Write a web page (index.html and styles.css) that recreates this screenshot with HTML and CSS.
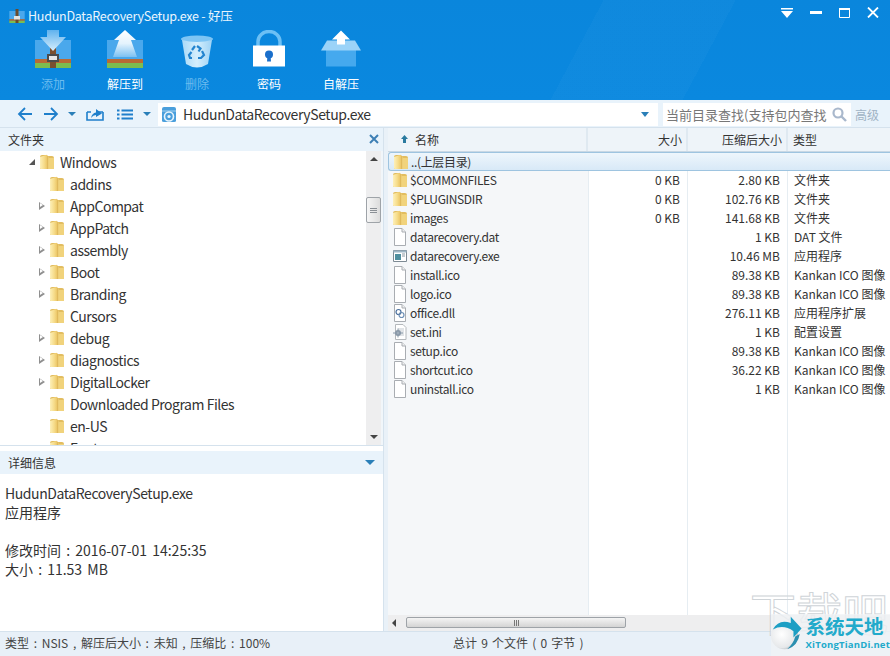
FILE: index.html
```html
<!DOCTYPE html>
<html lang="zh-CN">
<head>
<meta charset="utf-8">
<title>HudunDataRecoverySetup.exe - 好压</title>
<link rel="stylesheet" href="styles.css">
</head>
<body>
<svg class="defs" width="0" height="0" aria-hidden="true">
  <defs>
    <linearGradient id="fy" x1="0" y1="0" x2="1" y2="0"><stop offset="0" stop-color="#fdf0ba"/><stop offset=".6" stop-color="#f6dc8a"/><stop offset="1" stop-color="#ecc768"/></linearGradient>
    <linearGradient id="fr" x1="0" y1="0" x2="1" y2="0"><stop offset="0" stop-color="#d9b050"/><stop offset="1" stop-color="#f4d884"/></linearGradient>
    <linearGradient id="upa" x1="0" y1="0" x2="0" y2="1"><stop offset="0" stop-color="#fff"/><stop offset=".5" stop-color="#e4f3fd"/><stop offset="1" stop-color="#7cc1f2"/></linearGradient>
    <linearGradient id="dna" x1="0" y1="0" x2="0" y2="1"><stop offset="0" stop-color="#5fb2ee"/><stop offset="1" stop-color="#d7eefc"/></linearGradient>
    <linearGradient id="bin" x1="0" y1="0" x2="1" y2="0"><stop offset="0" stop-color="#a8d9f8"/><stop offset=".5" stop-color="#d4eefc"/><stop offset="1" stop-color="#9ed3f6"/></linearGradient>
    <symbol id="folder" viewBox="0 0 14 16">
      <path d="M0 3 Q0 1 2 1 H6 L7 2 H12 Q14 2 14 4 V14 Q14 15 13 15 H1 Q0 15 0 14Z" fill="#e2bd60"/>
      <path d="M0 3 L7 .8 V15 H1 Q0 15 0 14Z" fill="url(#fy)"/>
      <path d="M7 1 Q9 2.500 9 5 V15 H7Z" fill="url(#fr)"/>
      <path d="M9 4 H14 V14 Q14 15 13 15 H9Z" fill="#f1d37c"/>
    </symbol>
    <symbol id="file" viewBox="0 0 14 18">
      <path d="M1.500 .5 H9 L12.500 4 V17.500 H1.500Z" fill="#fff" stroke="#a9adb2"/>
      <path d="M9 .5 V4 H12.500" fill="#f0f0f0" stroke="#a9adb2"/>
    </symbol>
    <symbol id="strip" viewBox="0 0 36 28">
      <path d="M0 0 H36 V19 H0Z" fill="#4aa8ec"/>
      <path d="M0 19 H36 V23 H0Z" fill="#b96a35"/>
      <path d="M0 23 H36 V28 H0Z" fill="#7cbd50"/>
    </symbol>
  </defs>
</svg>
<div class="app">
  <header class="top">
    <div class="titlebar">
      <svg class="appicon" width="16" height="14" viewBox="0 0 16 14"><use href="#strip" y="2" width="16" height="12"/><path d="M6.500 0 h3 v14 h-3z" fill="#6b4a2c"/><path d="M5 7 h6 v3.500 h-6z" fill="#e3e3e3"/></svg>
      <span class="title">HudunDataRecoverySetup.exe - 好压</span>
      <div class="winctl">
        <svg width="12" height="10" viewBox="0 0 12 10"><path d="M0 0 H12 V1.500 H0Z M0 3 H12 L6 10Z" fill="#fff"/></svg>
        <svg width="12" height="3" viewBox="0 0 12 3"><path d="M0 0 H12 V3 H0Z" fill="#fff"/></svg>
        <svg width="11" height="10" viewBox="0 0 11 10"><path d="M.5 1 H10.500 V9.500 H.5Z" fill="none" stroke="#fff"/><path d="M0 0 H11 V2 H0Z" fill="#fff"/></svg>
        <svg width="12" height="11" viewBox="0 0 12 11"><path d="M1 .5 L11 10.500 M11 .5 L1 10.500" stroke="#fff" stroke-width="1.800"/></svg>
      </div>
    </div>
    <div class="tools">
      <div class="tool dim">
        <svg width="36" height="38" viewBox="0 0 36 38"><use href="#strip" y="10" width="36" height="28"/><path d="M15 10 h6 v28 h-6z" fill="#7a4f2f"/><path d="M12 24 h12 v8 h-12z" fill="#4b4b4b"/><path d="M14 26 h8 v4 h-8z" fill="#e6e6e6"/><path d="M12 0 H24 V7 H31 L18 21 L5 7 H12Z" fill="url(#dna)"/></svg>
        <span>添加</span>
      </div>
      <div class="tool">
        <svg width="36" height="38" viewBox="0 0 36 38"><use href="#strip" y="10" width="36" height="28"/><path d="M18 0 L29 10 H24 L30 27 H6 L12 10 H7Z" fill="url(#upa)"/></svg>
        <span>解压到</span>
      </div>
      <div class="tool dim trash">
        <svg width="32" height="33" viewBox="0 0 32 33"><ellipse cx="16" cy="4" rx="16" ry="3.500" fill="#7ec5f4"/><path d="M1 5 Q16 9 31 5 L27 29 Q16 36 5 29Z" fill="url(#bin)"/><path d="M16 11 l3.500 2.500 -2 3 M21 16 l2 4 -3 3 h-3 M11 23 h-2 l-1 -3 2.500 -3 M11 15 l3 -4" fill="none" stroke="#2384cf" stroke-width="2.200"/></svg>
        <span>删除</span>
      </div>
      <div class="tool">
        <svg width="34" height="37" viewBox="0 0 34 37"><path d="M6 16 V11 A11 10 0 0 1 28 11 V16" fill="none" stroke="#6cc0f5" stroke-width="3.500"/><path d="M1 15 H33 V36 H1Z" fill="#fff"/><circle cx="17" cy="24" r="4" fill="#1a6fcb"/><path d="M15.500 25 h3 l.5 6 h-4z" fill="#1a6fcb"/></svg>
        <span>密码</span>
      </div>
      <div class="tool">
        <svg width="40" height="37" viewBox="0 0 40 37"><path d="M5 18 H35 V36 H5Z" fill="#45a9ee"/><path d="M0 20 L6 10 H34 L40 20Z" fill="#9bd3f8"/><path d="M20 0 L29 9 H24 V14 H16 V9 H11Z" fill="#fff"/></svg>
        <span>自解压</span>
      </div>
    </div>
  </header>

  <nav class="nav">
    <svg class="nav-back" width="16" height="14" viewBox="0 0 16 14"><path d="M15 7 H2 M8 1 L2 7 L8 13" fill="none" stroke="#1f7fcb" stroke-width="1.800"/></svg>
    <svg class="nav-fwd" width="16" height="14" viewBox="0 0 16 14"><path d="M1 7 H14 M8 1 L14 7 L8 13" fill="none" stroke="#1f7fcb" stroke-width="1.800"/></svg>
    <span class="caret nav-c1"></span>
    <svg class="nav-up" width="18" height="14" viewBox="0 0 18 14"><path d="M1 5 V13 H17 V5 M1 5 H5 M12 5 H17" fill="none" stroke="#1f7fcb" stroke-width="1.600"/><path d="M5 11 Q6 6 10 5.500 V2 L16 6.500 L10 10 V8 Q7 8 5 11Z" fill="#1f7fcb"/></svg>
    <svg class="nav-list" width="16" height="11" viewBox="0 0 16 11"><path d="M0 .5 h2.500 v2 h-2.500z M4.500 .5 h11.500 v2 h-11.500z M0 4.500 h2.500 v2 h-2.500z M4.500 4.500 h11.500 v2 h-11.500z M0 8.500 h2.500 v2 h-2.500z M4.500 8.500 h11.500 v2 h-11.500z" fill="#1f7fcb"/></svg>
    <span class="caret nav-c2"></span>
    <div class="addr">
      <svg width="16" height="17" viewBox="0 0 16 17"><path d="M1 3 Q1 1 3 1 H13 Q15 1 15 3 V15 Q15 16 13 16 H3 Q1 16 1 15Z" fill="#4a9fdc"/><path d="M1 5 H15" stroke="#a7d3f0"/><circle cx="8" cy="10.500" r="4.500" fill="none" stroke="#e8f4fc" stroke-width="1.600"/><circle cx="8" cy="10.500" r="1.600" fill="#e8f4fc"/></svg>
      <span class="addr-text">HudunDataRecoverySetup.exe</span>
      <span class="caret addr-c"></span>
    </div>
    <div class="search">
      <span class="search-text">当前目录查找(支持包内查找</span>
      <svg width="15" height="15" viewBox="0 0 15 15"><circle cx="6" cy="6" r="4.500" fill="none" stroke="#a9b8cc" stroke-width="2.200"/><path d="M9.500 9.500 L14 14" stroke="#a9b8cc" stroke-width="2.400"/></svg>
    </div>
    <span class="adv">高级</span>
  </nav>

  <main class="main">
    <section class="left">
      <div class="phead"><span>文件夹</span>
        <svg width="10" height="10" viewBox="0 0 10 10"><path d="M1 1 L9 9 M9 1 L1 9" stroke="#3d7fb5" stroke-width="2"/></svg>
      </div>
      <div class="treewrap">
        <ul class="tree">
          <li class="lv0"><i class="tw open"></i><svg class="fi"><use href="#folder"/></svg>Windows</li>
          <li><i class="tw none"></i><svg class="fi"><use href="#folder"/></svg>addins</li>
          <li><i class="tw"></i><svg class="fi"><use href="#folder"/></svg>AppCompat</li>
          <li><i class="tw"></i><svg class="fi"><use href="#folder"/></svg>AppPatch</li>
          <li><i class="tw"></i><svg class="fi"><use href="#folder"/></svg>assembly</li>
          <li><i class="tw"></i><svg class="fi"><use href="#folder"/></svg>Boot</li>
          <li><i class="tw"></i><svg class="fi"><use href="#folder"/></svg>Branding</li>
          <li><i class="tw none"></i><svg class="fi"><use href="#folder"/></svg>Cursors</li>
          <li><i class="tw"></i><svg class="fi"><use href="#folder"/></svg>debug</li>
          <li><i class="tw"></i><svg class="fi"><use href="#folder"/></svg>diagnostics</li>
          <li><i class="tw"></i><svg class="fi"><use href="#folder"/></svg>DigitalLocker</li>
          <li><i class="tw none"></i><svg class="fi"><use href="#folder"/></svg>Downloaded Program Files</li>
          <li><i class="tw none"></i><svg class="fi"><use href="#folder"/></svg>en-US</li>
          <li><i class="tw none"></i><svg class="fi"><use href="#folder"/></svg>Fonts</li>
        </ul>
        <div class="vbar">
          <span class="arrow up"></span>
          <div class="vthumb"><b></b><b></b><b></b></div>
          <span class="arrow down"></span>
        </div>
      </div>
      <div class="phead detail-head"><span>详细信息</span><span class="caret"></span></div>
      <div class="details">
        <p class="fname">HudunDataRecoverySetup.exe</p>
        <p>应用程序</p>
        <p>&nbsp;</p>
        <p>修改时间 : 2016-07-01 14:25:35</p>
        <p>大小 : 11.53 MB</p>
      </div>
    </section>

    <section class="right">
      <div class="thead">
        <div class="th name"><svg width="7" height="8" viewBox="0 0 7 8"><path d="M3.500 0 L7 4 H5 V8 H2 V4 H0Z" fill="#2a7a9f"/></svg>名称</div>
        <div class="th num">大小</div>
        <div class="th num">压缩后大小</div>
        <div class="th">类型</div>
      </div>
      <div class="rows">
        <div class="row sel"><div class="cell name"><svg class="ri"><use href="#folder"/></svg>..(上层目录)</div></div>
        <div class="row"><div class="cell name"><svg class="ri"><use href="#folder"/></svg>$COMMONFILES</div><div class="cell num">0 KB</div><div class="cell num">2.80 KB</div><div class="cell">文件夹</div></div>
        <div class="row"><div class="cell name"><svg class="ri"><use href="#folder"/></svg>$PLUGINSDIR</div><div class="cell num">0 KB</div><div class="cell num">102.76 KB</div><div class="cell">文件夹</div></div>
        <div class="row"><div class="cell name"><svg class="ri"><use href="#folder"/></svg>images</div><div class="cell num">0 KB</div><div class="cell num">141.68 KB</div><div class="cell">文件夹</div></div>
        <div class="row"><div class="cell name"><svg class="ri"><use href="#file"/></svg>datarecovery.dat</div><div class="cell num"></div><div class="cell num">1 KB</div><div class="cell">DAT 文件</div></div>
        <div class="row"><div class="cell name"><svg class="ri" viewBox="0 0 14 18"><path d="M.5 3.500 H13.500 V14.500 H.5Z" fill="#fff" stroke="#7d8a94"/><path d="M.5 3.500 H13.500 V5.500 H.5Z" fill="#9fb7c6"/><path d="M2 7 H8 V13 H2Z" fill="#4f8f9f"/><path d="M9 7 h3 M9 9 h3" stroke="#8a98a3"/></svg>datarecovery.exe</div><div class="cell num"></div><div class="cell num">10.46 MB</div><div class="cell">应用程序</div></div>
        <div class="row"><div class="cell name"><svg class="ri"><use href="#file"/></svg>install.ico</div><div class="cell num"></div><div class="cell num">89.38 KB</div><div class="cell">Kankan ICO 图像</div></div>
        <div class="row"><div class="cell name"><svg class="ri"><use href="#file"/></svg>logo.ico</div><div class="cell num"></div><div class="cell num">89.38 KB</div><div class="cell">Kankan ICO 图像</div></div>
        <div class="row"><div class="cell name"><svg class="ri" viewBox="0 0 14 18"><use href="#file" width="14" height="18"/><circle cx="5.500" cy="8" r="2.500" fill="none" stroke="#4a6f9c" stroke-width="1.200"/><circle cx="8.500" cy="11" r="2.500" fill="none" stroke="#6d8fb5" stroke-width="1.200"/></svg>office.dll</div><div class="cell num"></div><div class="cell num">276.11 KB</div><div class="cell">应用程序扩展</div></div>
        <div class="row"><div class="cell name"><svg class="ri" viewBox="0 0 14 18"><path d="M2.500 1.500 H10 L13 4.500 V16.500 H2.500Z" fill="#fff" stroke="#b4b8bc"/><path d="M5 6 h6 M5 8 h6 M5 10 h6 M5 12 h6" stroke="#c3c9cf"/><circle cx="5" cy="10" r="3" fill="#8898a8"/><circle cx="5" cy="10" r="1.200" fill="#e6ecf2"/><path d="M0 10 h10 M5 5.500 v9" stroke="#8898a8"/></svg>set.ini</div><div class="cell num"></div><div class="cell num">1 KB</div><div class="cell">配置设置</div></div>
        <div class="row"><div class="cell name"><svg class="ri"><use href="#file"/></svg>setup.ico</div><div class="cell num"></div><div class="cell num">89.38 KB</div><div class="cell">Kankan ICO 图像</div></div>
        <div class="row"><div class="cell name"><svg class="ri"><use href="#file"/></svg>shortcut.ico</div><div class="cell num"></div><div class="cell num">36.22 KB</div><div class="cell">Kankan ICO 图像</div></div>
        <div class="row"><div class="cell name"><svg class="ri"><use href="#file"/></svg>uninstall.ico</div><div class="cell num"></div><div class="cell num">1 KB</div><div class="cell">Kankan ICO 图像</div></div>
      </div>
      <div class="hbar">
        <span class="arrow lt"></span>
        <div class="hthumb"><b></b><b></b><b></b></div>
      </div>
    </section>
  </main>

  <footer class="status">
    <span class="st-left">类型 : NSIS , 解压后大小 : 未知 , 压缩比 : 100%</span>
    <span class="st-mid">总计 9 个文件 ( 0 字节 )</span>
  </footer>

  <div class="mark">
    <div class="mark-ghost">下载吧</div>
    <div class="mark-logo">
      <svg width="34" height="38" viewBox="0 0 34 38">
        <defs><radialGradient id="ball" cx=".4" cy=".45" r=".7"><stop offset="0" stop-color="#fff"/><stop offset=".7" stop-color="#e6e8ea"/><stop offset="1" stop-color="#8f99a1"/></radialGradient></defs>
        <circle cx="15" cy="22" r="15" fill="url(#ball)"/>
        <path d="M2 15 Q9 3 22 8 L22 1 L34 14 L25 24 L25 17 Q14 9 2 15Z" fill="#1c9fc4"/>
        <path d="M27 23 L32 20 Q30 33 18 37 Q25 31 27 23Z" fill="#2a8fb0"/>
      </svg>
      <div class="mark-text"><strong>系统天地</strong><em>XiTongTianDi.net</em></div>
    </div>
  </div>
</div>
</body>
</html>
```

FILE: styles.css
```css
* { box-sizing: border-box; }
html, body { margin: 0; padding: 0; }
body {
  width: 890px;
  height: 656px;
  overflow: hidden;
  font-family: "Noto Sans CJK SC", "Open Sans", sans-serif;
  font-size: 13px;
  color: #333;
  background: #fff;
}
.defs { position: absolute; }
.app { position: relative; width: 890px; height: 656px; display: flex; flex-direction: column; overflow: hidden; background: #e9f1f8; }

/* top */
.top {
  height: 100px;
  flex: none;
  color: #fff;
  background:
    linear-gradient(118deg, transparent 64%, rgba(255,255,255,.025) 64%, rgba(255,255,255,.025) 78%, transparent 78%),
    linear-gradient(180deg, #0a86dc 0%, #0a88df 100%);
}
.titlebar { height: 30px; display: flex; align-items: center; padding: 1px 0 0 9px; }
.appicon { margin-right: 3px; }
.title { font-size: 12.500px; color: #e9f5fd; letter-spacing: -.25px; }
.winctl { margin-left: auto; display: flex; align-items: center; gap: 17px; padding: 0 11px 0 0; margin-top: -6px; }
.tools { display: flex; padding-left: 17px; }
.tool { width: 72px; display: flex; flex-direction: column; align-items: center; height: 70px; }
.tool svg { flex: none; height: 38px; }
.tool.trash svg { margin-top: 5px; height: 33px; }
.tool span { margin-top: 7px; font-size: 12px; line-height: 17px; color: #fff; }
.tool.dim span { color: #6cbcef; }

/* nav */
.nav { height: 28px; flex: none; display: flex; align-items: center; padding: 1px 0 0 17px; background: #e9f3fb; border-bottom: 1px solid #d5e2ed; }
.nav-fwd { margin-left: 10px; }
.caret { display: inline-block; width: 0; height: 0; border-left: 5px solid transparent; border-right: 5px solid transparent; border-top: 5px solid #2a7fb8; }
.nav-c1 { margin-left: 9px; border-left-width: 4px; border-right-width: 4px; border-top-width: 4px; }
.nav-up { margin-left: 10px; }
.nav-list { margin-left: 13px; }
.nav-c2 { margin-left: 10px; border-left-width: 4px; border-right-width: 4px; border-top-width: 4px; }
.addr { width: 500px; height: 23px; margin-left: 7px; background: #fff; display: flex; align-items: center; padding-left: 3px; }
.addr-text { margin-left: 6px; font-size: 14px; color: #333; letter-spacing: -.42px; }
.addr-c { margin-left: auto; margin-right: 9px; border-left-width: 4px; border-right-width: 4px; border-top-width: 5px; }
.search { width: 188px; height: 23px; margin-left: 5px; background: #fff; display: flex; align-items: center; justify-content: space-between; padding: 0 4px 0 3px; }
.search-text { font-size: 13px; color: #777; white-space: nowrap; }
.adv { margin-left: 4px; font-size: 12px; color: #9fb2c4; }

/* main */
.main { flex: 1; display: flex; min-height: 0; background: #e9f1f8; }
.left { width: 384px; display: flex; flex-direction: column; border-right: 1px solid #d5e2ed; background: #fff; }
.phead { height: 23px; flex: none; display: flex; align-items: center; justify-content: space-between; padding: 0 3px 1px 8px; background: #e9f3fb; font-size: 12px; color: #333; }
.phead svg { margin-right: 1px; }
.treewrap { height: 295px; flex: none; display: flex; overflow: hidden; padding-right: 2px; border-bottom: 1px solid #d5e2ed; background: #f1f6fa; }
.tree { flex: 1; list-style: none; margin: 0; padding: 0; background: #fff; overflow: hidden; }
.tree li { height: 22px; display: flex; align-items: center; padding: 0 0 1px 39px; font-size: 14px; letter-spacing: -.48px; color: #333; white-space: nowrap; }
.tree li.lv0 { padding-left: 29px; }
.tw { position: relative; width: 0; height: 0; margin-right: 5px; flex: none; border-left: 6px solid #8f8f8f; border-top: 4px solid transparent; border-bottom: 4px solid transparent; }
.tw::after { content: ""; position: absolute; left: -5px; top: -2.500px; width: 0; height: 0; border-left: 3.500px solid #fff; border-top: 2.500px solid transparent; border-bottom: 2.500px solid transparent; }
.tw.open { border-left: 0; border-top: 6px solid transparent; border-bottom: 0; border-right: 6px solid #555; }
.tw.open::after, .tw.none::after { display: none; }
.tw.none { border-color: transparent; }
.fi { width: 14px; height: 16px; margin-right: 6px; flex: none; }
.vbar { width: 15px; flex: none; background: #eeeeef; position: relative; display: flex; flex-direction: column; align-items: center; justify-content: space-between; padding: 6px 0; }
.vthumb { position: absolute; top: 46px; left: 0; width: 15px; height: 26px; border: 1px solid #9ea3a8; border-radius: 2px; background: linear-gradient(90deg, #f6f6f6, #dcdcdc); display: flex; flex-direction: column; align-items: center; justify-content: center; gap: 1px; }
.vthumb b { width: 7px; height: 1px; background: #8a8f95; }
.arrow { width: 0; height: 0; display: block; }
.arrow.up { border-left: 4px solid transparent; border-right: 4px solid transparent; border-bottom: 4px solid #444; }
.arrow.down { border-left: 4px solid transparent; border-right: 4px solid transparent; border-top: 4px solid #444; }
.arrow.lt { border-top: 4px solid transparent; border-bottom: 4px solid transparent; border-right: 4px solid #444; }
.detail-head { margin-top: 5px; }
.detail-head .caret { margin-right: 5px; }
.details { flex: 1; background: #fff; padding: 10px 5px 0; font-size: 14px; color: #333; word-spacing: 2px; }
.details p { margin: 0; height: 19px; line-height: 19px; white-space: nowrap; }
.details p.fname { letter-spacing: -.42px; }

/* right */
.right { margin-left: 4px; flex: 1; display: flex; flex-direction: column; min-width: 0; background: #fff; }
.thead { height: 24px; flex: none; display: grid; grid-template-columns: 200px 100px 100px 1fr; background: #eef4f9; border-bottom: 1px solid #c9d8e4; }
.th { display: flex; align-items: center; padding: 0 0 1px 5px; font-size: 12px; color: #333; border-right: 2px solid #dfe9f1; }
.th.name { padding-left: 13px; gap: 7px; }
.th.num { justify-content: flex-end; padding: 0 4px 1px 0; }
.th:last-child { border-right: 0; }
.rows {
  flex: 1;
  min-height: 0;
  background: linear-gradient(90deg, #f5f7f9 0, #f5f7f9 200px, #e6edf2 200px, #e6edf2 201px, #fff 201px, #fff 299px, #e6edf2 299px, #e6edf2 300px, #fff 300px, #fff 399px, #e6edf2 399px, #e6edf2 400px, #fff 400px);
}
.row { height: 19px; padding-bottom: 2px; display: grid; grid-template-rows: 17px; grid-template-columns: 200px 100px 100px 1fr; align-items: center; font-size: 12px; color: #333; }
.row.sel { border: 1px solid #9ec4e0; border-right: 0; border-radius: 3px 0 0 3px; padding-bottom: 0; background: linear-gradient(#eef6fc, #d8e9f7); }
.cell { white-space: nowrap; padding-left: 6px; line-height: 17px; height: 17px; }
.cell.name { display: flex; align-items: center; padding-left: 5px; letter-spacing: -.35px; }
.cell.num { text-align: right; padding: 0 8px 0 0; }
.ri { width: 14px; height: 18px; margin: 1px 3px 0 0; flex: none; }
.hbar { height: 16px; flex: none; background: #eeeeef; position: relative; display: flex; align-items: center; padding-left: 4px; }
.hthumb { position: absolute; left: 18px; top: 2px; width: 220px; height: 11px; border: 1px solid #9ea3a8; border-radius: 2px; background: linear-gradient(#f4f4f4, #d4d4d4); display: flex; align-items: center; justify-content: center; gap: 1px; }
.hthumb b { width: 1px; height: 6px; background: #777; }

/* status */
.status { height: 25px; flex: none; display: flex; align-items: center; padding: 0 0 3px 5px; background: #e8f0f8; border-top: 1px solid #d5e2ed; font-size: 12px; color: #444; word-spacing: 2px; }
.st-left { width: 448px; }
.st-mid { word-spacing: 1.500px; }

/* watermark */
.mark { position: absolute; left: 750px; bottom: 0; width: 140px; height: 62px; }
.mark-ghost { position: absolute; left: 0; top: -8px; font-size: 46px; line-height: 50px; color: transparent; -webkit-text-stroke: 1px #cfd4d8; white-space: nowrap; }
.mark-logo { position: absolute; left: 21px; top: 20px; width: 119px; height: 42px; display: flex; gap: 4px; background: rgba(240,243,246,.75); }
.mark-text { display: flex; flex-direction: column; }
.mark-text strong { font-size: 19.500px; line-height: 24px; color: #22aacb; white-space: nowrap; }
.mark-text em { font-style: normal; font-weight: 700; font-size: 9.500px; line-height: 14px; letter-spacing: .2px; color: #22aacb; font-family: "Open Sans", sans-serif; white-space: nowrap; }
```
